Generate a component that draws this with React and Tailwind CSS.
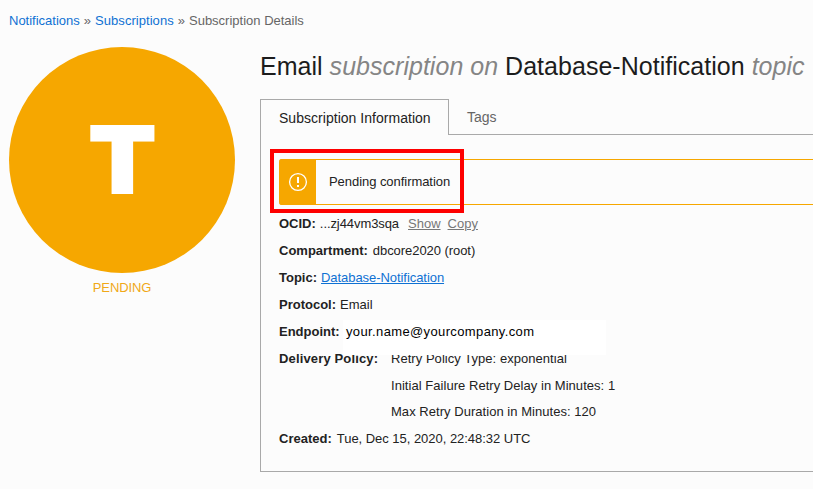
const Row = ({ label, children, className = "" }) => (
  <div className={`flex h-[26.875px] items-center whitespace-pre ${className}`}>
    {label && <span className="font-bold">{label}</span>}
    {children}
  </div>
);

export default function App() {
  return (
    <div className="h-[489px] w-[813px] overflow-hidden bg-[#fcfcfc] font-['Liberation_Sans',Arial,sans-serif] text-[13px] text-[#222]">
      <nav className="flex h-[47px] items-start gap-1 whitespace-nowrap pl-[9px] pt-[11px] leading-5 text-[#666]">
        <a className="text-[#0f71d3]">Notifications</a>
        <span>»</span>
        <a className="tracking-[0.05px] text-[#0f71d3]">Subscriptions</a>
        <span>»</span>
        <span>Subscription Details</span>
      </nav>

      <div className="flex">
        <aside className="ml-[9px] flex w-[226px] shrink-0 flex-col items-center">
          <div className="flex size-[226px] items-center justify-center rounded-full bg-[#f6a700]">
            <span className="scale-x-[1.07] font-['Inter',sans-serif] text-[91.5px] font-black leading-none text-white [-webkit-text-stroke:2px_white]">T</span>
          </div>
          <span className="mt-[5px] leading-5 tracking-[-0.1px] text-[#f0a818]">PENDING</span>
        </aside>

        <main className="ml-[25px] flex w-[600px] shrink-0 flex-col">
          <h1 className="h-[52px] whitespace-nowrap pt-1 text-[25px] leading-[30px] tracking-[0.025px] text-[#1c1c1c]">
            Email <i className="text-[#858585]">subscription on</i> Database-Notification{" "}
            <i className="text-[#858585]">topic</i>
          </h1>

          <div className="flex h-9 whitespace-nowrap text-sm">
            <div className="flex w-[189px] items-center border border-b-0 border-[#a9a9a9] pl-[18px] pt-px tracking-[0.03px]">
              Subscription Information
            </div>
            <div className="flex grow items-center border-b border-[#a9a9a9] pl-[18px] pt-px text-[#666]">
              Tags
            </div>
          </div>

          <section className="h-[337px] border-b border-l border-[#a9a9a9] pl-[18px] pt-6">
            <div className="relative flex h-[46px] rounded-l-[3px] border-y border-[#f6a700]">
              <div className="-my-px flex w-[37px] items-center justify-center rounded-l-[3px] bg-[#f6a700]">
                <svg width="20" height="20" viewBox="0 0 20 20" fill="none" stroke="white">
                  <circle cx="10" cy="10" r="8.4" strokeWidth="1.3" />
                  <path d="M10 5v6M10 13v2" strokeWidth="2" />
                </svg>
              </div>
              <span className="self-center pl-[13px] tracking-[-0.05px]">Pending confirmation</span>
              <div className="absolute -left-[9px] -top-[11px] h-16 w-[194px] border-4 border-[#fe0000]" />
            </div>

            <div className="pt-[5.5px]">
              <Row label="OCID:">
                <span className="ml-1 tracking-[-0.08px]">...zj44vm3sqa</span>
                <a className="ml-[9px] text-[#777] underline">Show</a>
                <a className="ml-[7px] text-[#777] underline">Copy</a>
              </Row>
              <Row label="Compartment:">
                <span className="ml-[5px] tracking-[-0.06px]">dbcore2020 (root)</span>
              </Row>
              <Row label="Topic:">
                <a className="ml-1 tracking-[-0.06px] text-[#0f71d3] underline">Database-Notification</a>
              </Row>
              <Row label="Protocol:">
                <span className="ml-1">Email</span>
              </Row>
              <Row label="Endpoint:" className="relative z-10">
                <div className="absolute left-[64px] top-[2px] flex h-[35px] w-[263px] items-start bg-white pl-[3px] pt-[2px] text-black">
                  <span className="leading-5 tracking-[0.37px]">your.name@yourcompany.com</span>
                </div>
              </Row>
              <div className="flex">
                <Row label="Delivery Policy:" className="w-[112px] tracking-[0.15px]" />
                <div>
                  <Row className="tracking-[0.04px]">Retry Policy Type: exponential</Row>
                  <Row className="pt-px tracking-[0.04px]">Initial Failure Retry Delay in Minutes: 1</Row>
                  <Row className="tracking-[0.04px]">Max Retry Duration in Minutes: 120</Row>
                </div>
              </div>
              <Row label="Created:">
                <span className="ml-[5px] tracking-[-0.03px]">Tue, Dec 15, 2020, 22:48:32 UTC</span>
              </Row>
            </div>
          </section>
        </main>
      </div>
    </div>
  );
}
